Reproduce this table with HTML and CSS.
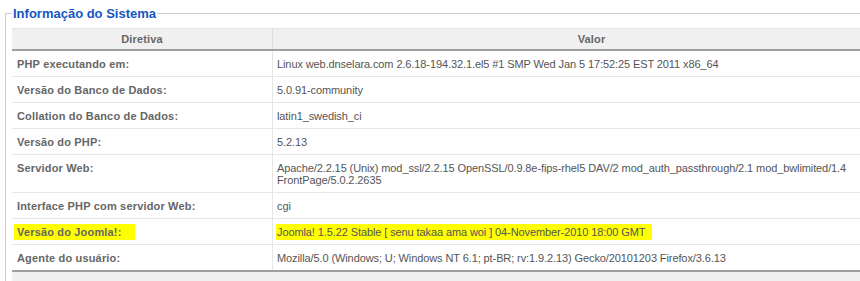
FILE: index.html
```html
<!DOCTYPE html>
<html lang="pt-BR">
<head>
<meta charset="utf-8">
<title>Informação do Sistema</title>
<link rel="stylesheet" href="styles.css">
</head>
<body>
<fieldset class="panel">
  <legend class="panel-title">Informação do Sistema</legend>
  <table class="info-table">
    <thead>
      <tr>
        <th class="col-key">Diretiva</th>
        <th class="col-val">Valor</th>
      </tr>
    </thead>
    <tbody>
      <tr><td class="key">PHP executando em:</td><td class="val">Linux web.dnselara.com 2.6.18-194.32.1.el5 #1 SMP Wed Jan 5 17:52:25 EST 2011 x86_64</td></tr>
      <tr><td class="key">Versão do Banco de Dados:</td><td class="val">5.0.91-community</td></tr>
      <tr><td class="key">Collation do Banco de Dados:</td><td class="val">latin1_swedish_ci</td></tr>
      <tr><td class="key">Versão do PHP:</td><td class="val">5.2.13</td></tr>
      <tr><td class="key">Servidor Web:</td><td class="val">Apache/2.2.15 (Unix) mod_ssl/2.2.15 OpenSSL/0.9.8e-fips-rhel5 DAV/2 mod_auth_passthrough/2.1 mod_bwlimited/1.4<br>FrontPage/5.0.2.2635</td></tr>
      <tr><td class="key">Interface PHP com servidor Web:</td><td class="val">cgi</td></tr>
      <tr><td class="key"><span class="mark mark-key">Versão do Joomla!:</span></td><td class="val"><span class="mark mark-val">Joomla! 1.5.22 Stable [ senu takaa ama woi ] 04-November-2010 18:00 GMT</span></td></tr>
      <tr><td class="key">Agente do usuário:</td><td class="val">Mozilla/5.0 (Windows; U; Windows NT 6.1; pt-BR; rv:1.9.2.13) Gecko/20101203 Firefox/3.6.13</td></tr>
    </tbody>
    <tfoot>
      <tr><td colspan="2" class="foot"></td></tr>
    </tfoot>
  </table>
</fieldset>
</body>
</html>
```

FILE: styles.css
```css
html, body {
  margin: 0;
  padding: 0;
  overflow: hidden;
  background: #ffffff;
}

body {
  font-family: "Liberation Sans", Arial, sans-serif;
  font-size: 11px;
  color: #555;
}

.panel {
  margin: 6px 0 0 5px;
  padding: 0 0 0 6px;
  border: 1px solid #cccccc;
  border-right: none;
  border-bottom: none;
  min-width: 0;
  width: 920px;
}

.panel-title {
  padding: 0 1px;
  margin: 0;
  font-size: 13px;
  font-weight: bold;
  line-height: 15px;
  color: #1556c2;
}

.info-table {
  margin-top: 7px;
  width: 898px;
  border-collapse: collapse;
  border-spacing: 0;
}

.info-table th {
  background: #f0f0f0;
  border-top: 1px solid #e4e4e4;
  border-bottom: 2px solid #9f9f9f;
  color: #666;
  font-weight: bold;
  font-size: 11px;
  line-height: 13px;
  padding: 4px 4px 3px;
  text-align: center;
  letter-spacing: 0.15px;
}

.info-table th.col-key {
  width: 250px;
  border-right: 1px solid #dddddd;
}

.info-table td {
  line-height: 12px;
  padding: 7px 5px 6px;
  border-bottom: 1px solid #e6e6e6;
  vertical-align: top;
  text-align: left;
}

.info-table td.key {
  width: 250px;
  font-weight: bold;
  color: #666;
  letter-spacing: 0.17px;
  border-right: 1px solid #e6e6e6;
}

.info-table td.val {
  color: #555;
  padding-left: 4px;
  letter-spacing: -0.1px;
}

.info-table tbody tr:last-child td {
  border-bottom: 2px solid #9f9f9f;
}

.info-table td.foot {
  background: #f0f0f0;
  border: none;
  height: 10px;
  padding: 0;
}

.mark {
  background: #ffff00;
  padding: 2px 0;
}

.mark-key {
  margin-left: -3px;
  padding-left: 3px;
  padding-right: 13px;
}

.mark-val {
  margin-left: -1px;
  padding-left: 1px;
  padding-right: 7px;
}
```
